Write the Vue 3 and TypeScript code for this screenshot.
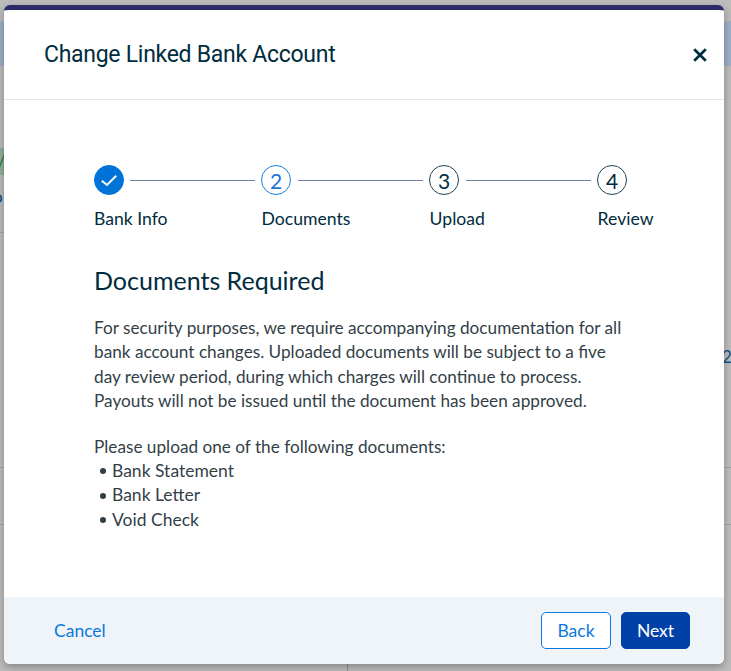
<script setup lang="ts">
interface Step { label: string; num: number; state: 'done' | 'active' | 'todo' }
const steps: Step[] = [
  { label: 'Bank Info', num: 1, state: 'done' },
  { label: 'Documents', num: 2, state: 'active' },
  { label: 'Upload', num: 3, state: 'todo' },
  { label: 'Review', num: 4, state: 'todo' },
]
const docs = ['Bank Statement', 'Bank Letter', 'Void Check']
</script>

<template>
  <div class="page">
    <div class="backdrop" aria-hidden="true">
      <div class="bg-band"></div>
      <div class="bg-green"><span>/</span></div>
      <span class="bg-o">o</span>
      <div class="bg-line l1"></div>
      <div class="bg-line l2"></div>
      <div class="bg-line l3"></div>
      <span class="bg-num">2</span>
      <div class="bg-v"></div>
    </div>
    <div class="modal">
      <header class="head">
        <h1>Change Linked Bank Account</h1>
        <svg class="close" width="14" height="14" viewBox="0 0 14 14">
          <path d="M1.2 1.2L12.8 12.8M12.8 1.2L1.2 12.8" stroke="#002c3e" stroke-width="2.7" fill="none" />
        </svg>
      </header>
      <main class="body">
        <ol class="stepper">
          <li v-for="(s, i) in steps" :key="s.label" class="step">
            <div class="track">
              <span class="dot" :class="s.state">
                <svg v-if="s.state === 'done'" width="18" height="13" viewBox="0 0 18 13">
                  <path d="M1.8 6.8L7 11L16.2 1.8" stroke="#fff" stroke-width="2" fill="none" />
                </svg>
                <template v-else>{{ s.num }}</template>
              </span>
              <span v-if="i < steps.length - 1" class="line"></span>
            </div>
            <span class="label">{{ s.label }}</span>
          </li>
        </ol>
        <h2>Documents Required</h2>
        <p class="intro">For security purposes, we require accompanying documentation for all bank account changes. Uploaded documents will be subject to a five day review period, during which charges will continue to process. Payouts will not be issued until the document has been approved.</p>
        <p class="lead">Please upload one of the following documents:</p>
        <ul class="docs">
          <li v-for="d in docs" :key="d"><span class="bullet"></span>{{ d }}</li>
        </ul>
      </main>
      <footer class="foot">
        <a class="cancel">Cancel</a>
        <div class="actions">
          <button class="btn back">Back</button>
          <button class="btn next">Next</button>
        </div>
      </footer>
    </div>
  </div>
</template>

<style>
html, body { margin: 0; background: #bdbdbd; }
</style>

<style scoped>
.page {
  position: relative;
  width: 731px;
  height: 671px;
  overflow: hidden;
  background: #bdbdbd;
  padding: 5px 7px 7px 4px;
  box-sizing: border-box;
  font-family: Lato, sans-serif;
}
.backdrop { position: absolute; inset: 0; }
.bg-band { position: absolute; left: 0; right: 0; top: 21px; height: 45px; background: #9fb0c8; }
.bg-green { position: absolute; left: 0; top: 148px; width: 4px; height: 27px; background: #93b09b; overflow: hidden; color: #2a7f3f; font: 20px Lato, sans-serif; }
.bg-green span { margin-left: -3px; }
.bg-o { position: absolute; left: -7px; top: 187px; color: #0b4f80; font: 17px/20px Lato, sans-serif; }
.bg-line { position: absolute; height: 1px; background: #a5a5a5; }
.l1 { left: 0; width: 4px; top: 232px; }
.l2 { left: 0; right: 0; top: 467px; }
.l3 { left: 0; right: 0; top: 524px; }
.bg-num { position: absolute; left: 722px; top: 345px; color: #1b4f7a; font: 17px/24px Lato, sans-serif; }
.bg-v { position: absolute; left: 347px; top: 660px; width: 1px; height: 11px; background: #8f8f9a; }

.modal {
  position: relative;
  width: 720px;
  height: 659px;
  display: flex;
  flex-direction: column;
  box-sizing: border-box;
  background: #fff;
  border-top: 5px solid #2b2a6b;
  border-radius: 6px;
  box-shadow: 0 3px 8px rgba(0, 0, 0, 0.3);
  overflow: hidden;
}
.head {
  height: 90px;
  flex: none;
  box-sizing: border-box;
  border-bottom: 1px solid #e5e5e5;
  display: flex;
  align-items: center;
  justify-content: space-between;
  padding: 0 17px 0 40px;
}
h1 {
  margin: 0;
  font: 400 23px/30px Roboto, sans-serif;
  letter-spacing: -0.28px;
  color: #002c3e;
}
.close { display: block; }
.body { flex: 1; padding: 65px 0 0 90px; }
.stepper {
  list-style: none;
  margin: 0;
  padding: 0;
  display: flex;
  width: 535px;
}
.step { width: 168px; flex: none; color: #002c3e; }
.step:first-child { width: 167px; }
.track { display: flex; align-items: center; height: 30px; }
.dot {
  width: 30px;
  height: 30px;
  flex: none;
  box-sizing: border-box;
  border-radius: 50%;
  display: flex;
  align-items: center;
  justify-content: center;
  font-size: 21px;
  border: 1px solid #1a4456;
  color: #002c3e;
}
.dot.done { background: #0073d9; border-color: #0073d9; }
.dot.active { border-color: #1a80dc; color: #1a73d0; }
.line { width: 125px; height: 1px; margin-left: 7px; background: #6b7fa8; }
.step:first-child .line { margin-left: 6px; }
.label { display: block; margin-top: 14px; font-size: 17.6px; line-height: 20px; }
.step:not(:first-child) .label { padding-left: 0.6px; }
h2 {
  margin: 35px 0 0;
  font: 400 25px/32px Lato, sans-serif;
  color: #002c3e;
}
.intro {
  width: 536px;
  margin: 20px 0 0;
  font-size: 17.2px;
  line-height: 24.4px;
  color: #333f48;
}
.lead {
  margin: 21px 0 0;
  font-size: 17.2px;
  line-height: 24.4px;
  color: #333f48;
}
.docs {
  list-style: none;
  margin: 0;
  padding: 0 0 0 6px;
  font-size: 17.5px;
  line-height: 24.4px;
  color: #333f48;
}
.docs li { display: flex; align-items: center; }
.bullet {
  width: 6px;
  height: 6px;
  margin-right: 6px;
  border-radius: 50%;
  background: #333f48;
}
.foot {
  height: 67px;
  flex: none;
  box-sizing: border-box;
  background: #eff4f9;
  display: flex;
  align-items: center;
  justify-content: space-between;
  padding: 0 34px 0 50px;
  position: relative;
}
.cancel { color: #0a78e0; font-size: 17.5px; }
.actions { display: flex; gap: 10px; }
.btn {
  height: 37px;
  box-sizing: border-box;
  border-radius: 5px;
  font: 400 17.5px Lato, sans-serif;
  padding: 0;
}
.back { width: 70px; background: #fff; border: 1px solid #0a78e0; color: #0a78e0; }
.next { width: 69px; background: #0041a8; border: 1px solid #0041a8; color: #fff; }
</style>
